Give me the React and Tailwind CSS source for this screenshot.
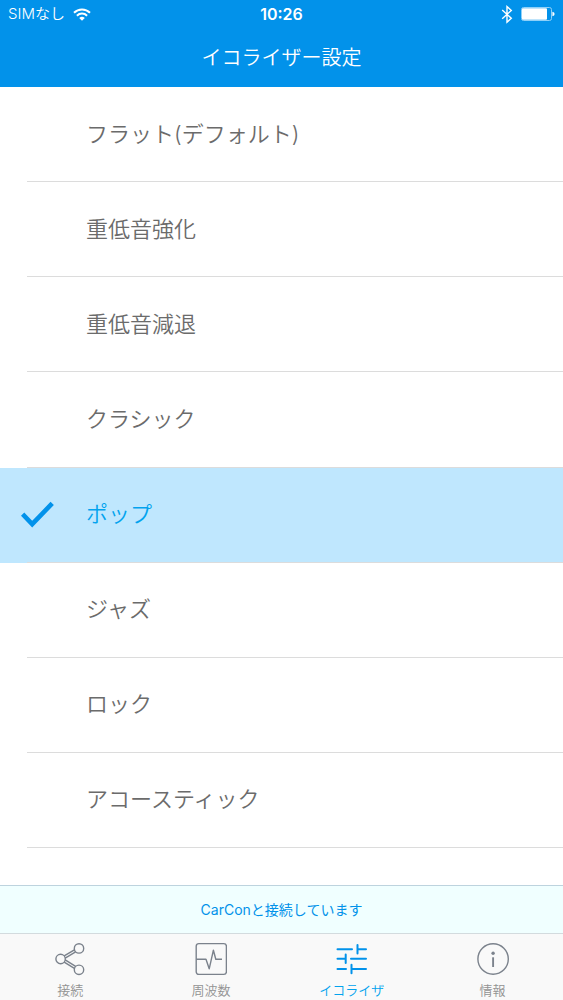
import { useState } from "react";

const presets = [
  "フラット(デフォルト)",
  "重低音強化",
  "重低音減退",
  "クラシック",
  "ポップ",
  "ジャズ",
  "ロック",
  "アコースティック",
];

function WifiIcon() {
  return (
    <svg viewBox="0 0 18 13" className="h-[13px] w-[18px]" fill="none" stroke="currentColor" strokeWidth="2" aria-hidden="true">
      <path d="M1 4.8 C5.5 0.4 12.5 0.4 17 4.8" />
      <path d="M3.9 7.7 C6.8 4.9 11.2 4.9 14.1 7.7" />
      <path d="M6.2 9.9 Q9 7.6 11.8 9.9 L9 12.7 Z" fill="currentColor" stroke="none" />
    </svg>
  );
}

function BluetoothIcon() {
  return (
    <svg viewBox="0 0 12 19" className="h-[19px] w-3" fill="none" stroke="currentColor" strokeWidth="1.4" aria-hidden="true">
      <path d="M1.2 5 L10.3 13.3 L6 17.2 V1.6 L10.3 5.4 L1.2 13.7" />
    </svg>
  );
}

function BatteryIcon() {
  return (
    <svg viewBox="0 0 34 14" className="h-[14px] w-[34px]" aria-hidden="true">
      <rect x="0.5" y="0.5" width="30" height="13" rx="2" fill="none" stroke="#8fd0f8" />
      <rect x="1" y="1.2" width="25" height="11.6" rx="1" fill="#fff" />
      <path d="M31.4 4.7 Q33.6 5.3 33.6 7 Q33.6 8.7 31.4 9.3 Z" fill="#fff" />
    </svg>
  );
}

function CheckIcon() {
  return (
    <svg viewBox="0 0 33 27" className="h-[27px] w-[33px]" fill="none" stroke="#0292ea" strokeWidth="4.6" aria-hidden="true">
      <path d="M1.6 13.2 L11.2 23.2 L31.2 2.4" />
    </svg>
  );
}

function ShareIcon() {
  return (
    <svg viewBox="0 0 32 34" className="h-[34px] w-8" fill="none" stroke="currentColor" strokeWidth="1.4" aria-hidden="true">
      <circle cx="6.6" cy="17" r="4.7" />
      <circle cx="25" cy="6.4" r="4.7" />
      <circle cx="25" cy="27.8" r="4.7" />
      <path d="M10.2 13.9 L20.4 7.8 M11.2 16.1 L21.6 9.8 M11.2 17.9 L21.6 24.4 M10.2 20.1 L20.4 26.4" />
    </svg>
  );
}

function WaveIcon() {
  return (
    <svg viewBox="0 0 32 34" className="h-[34px] w-8" fill="none" stroke="currentColor" strokeWidth="1.4" aria-hidden="true">
      <rect x="1.2" y="1.6" width="30.2" height="30.8" rx="2.6" />
      <path d="M1.2 17.2 H11 L14.2 26.8 L18.4 8.2 L20.8 17.2 H27" strokeLinejoin="round" />
    </svg>
  );
}

function SlidersIcon() {
  return (
    <svg viewBox="0 0 32 34" className="h-[34px] w-8" fill="none" stroke="currentColor" strokeWidth="2" strokeLinecap="round" aria-hidden="true">
      <path d="M1.5 7.3 H16 M21.5 7.3 H30 M21.5 3 V11.6" />
      <path d="M1.5 16.8 H9.7 M9.7 12.5 V21.1 M15 16.8 H30" />
      <path d="M1.5 27 H10 M15.5 27 H30 M15.5 22.7 V31.3" />
    </svg>
  );
}

function InfoIcon() {
  return (
    <svg viewBox="0 0 32 34" className="h-[34px] w-8" fill="none" stroke="currentColor" strokeWidth="1.4" aria-hidden="true">
      <circle cx="16.1" cy="17" r="15.2" />
      <circle cx="16.1" cy="11.3" r="1.7" fill="currentColor" stroke="none" />
      <path d="M16.1 15.3 V25" strokeWidth="1.9" />
    </svg>
  );
}

const tabs = [
  { label: "接続", Icon: ShareIcon },
  { label: "周波数", Icon: WaveIcon },
  { label: "イコライザ", Icon: SlidersIcon, active: true },
  { label: "情報", Icon: InfoIcon },
];

export default function App() {
  const [selected, setSelected] = useState("ポップ");

  return (
    <div className="flex min-h-screen flex-col bg-white font-['Inter','Noto_Sans_CJK_JP',sans-serif]">
      <header className="bg-[#0292ea] text-white">
        <div className="grid h-7 grid-cols-3 items-center px-2 text-[15px]">
          <div className="flex items-center gap-2 font-[350]">
            <span>SIMなし</span>
            <WifiIcon />
          </div>
          <div className="text-center text-base font-semibold">10:26</div>
          <div className="flex items-center justify-end gap-2">
            <BluetoothIcon />
            <BatteryIcon />
          </div>
        </div>
        <h1 className="flex h-[59px] items-center justify-center text-xl font-[350]">イコライザー設定</h1>
      </header>

      <main className="flex grow flex-col pb-[37px]">
        {presets.map((name) => {
          const on = name === selected;
          return (
            <label
              key={name}
              className={`flex min-h-16 flex-1 cursor-pointer flex-col ${on ? "bg-[#bfe7fe] text-[#02a3ee]" : "text-[#6b6b6b]"}`}
            >
              <input
                type="radio"
                name="preset"
                className="sr-only"
                checked={on}
                onChange={() => setSelected(name)}
              />
              <span className="flex grow items-center gap-8 pl-[21px] text-[22px] font-[350]">
                <span className="w-[33px]">{on && <CheckIcon />}</span>
                {name}
              </span>
              <span className="ml-[27px] h-px bg-[#dcdcdc]" />
            </label>
          );
        })}
      </main>

      <p className="flex h-12 items-center justify-center border-t border-[#bdd3de] bg-[#f0ffff] text-sm text-[#0292ea]">
        CarConと接続しています
      </p>

      <nav className="grid h-[67px] grid-cols-4 border-t border-[#d3dbde] bg-[#f9f9f9]">
        {tabs.map(({ label, Icon, active }) => (
          <button
            key={label}
            type="button"
            aria-current={active ? "page" : undefined}
            className={`flex flex-col items-center gap-1 pt-2 ${active ? "text-[#0292ea]" : "text-[#7b828c]"}`}
          >
            <Icon />
            <span className={`text-[13px] leading-5 font-[350] ${active ? "text-[#02a3ee]" : "text-[#929292]"}`}>{label}</span>
          </button>
        ))}
      </nav>
    </div>
  );
}
